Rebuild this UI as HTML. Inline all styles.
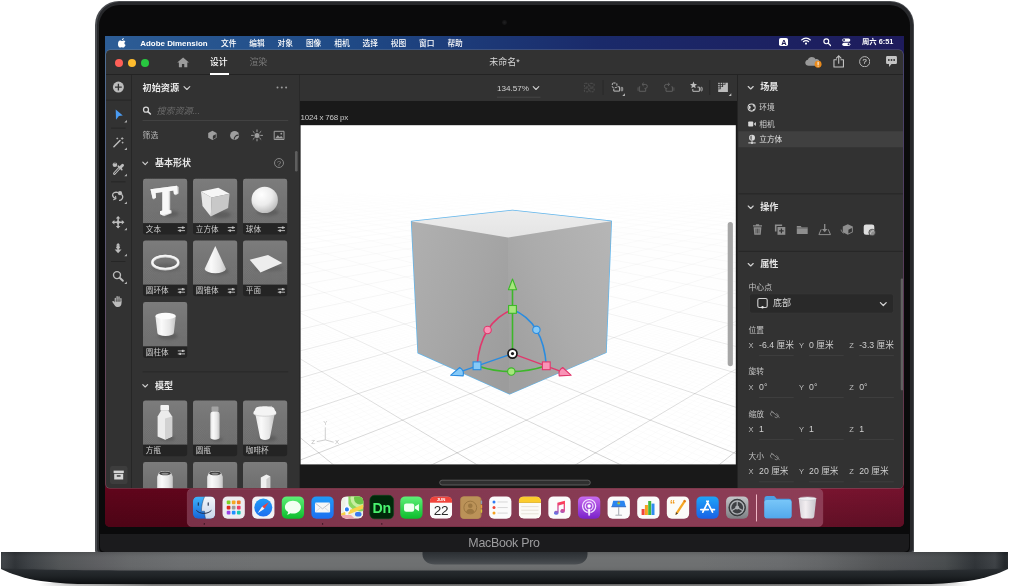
<!DOCTYPE html>
<html lang="zh-CN">
<head>
<meta charset="utf-8">
<title>Adobe Dimension – MacBook Pro</title>
<style>
*{box-sizing:border-box;margin:0;padding:0}
html,body{width:1009px;height:586px;overflow:hidden;background:#fff}
body{position:relative;font-family:"Liberation Sans","Noto Sans CJK SC",sans-serif;color:#d0d0d0;-webkit-font-smoothing:antialiased}
.abs{position:absolute}
/* ---------- laptop ---------- */
#shadow{left:40px;top:582.5px;width:929px;height:4px;background:linear-gradient(90deg,rgba(90,90,90,0) 0%,rgba(90,90,90,.5) 4%,rgba(80,80,80,.95) 12%,rgba(70,70,70,1) 50%,rgba(80,80,80,.95) 88%,rgba(90,90,90,.5) 96%,rgba(90,90,90,0) 100%)}
#shadow2{left:40px;top:583.5px;width:929px;height:2.5px;background:linear-gradient(180deg,rgba(255,255,255,.1) 0%,rgba(255,255,255,.32) 100%)}
#lid{left:95px;top:.8px;width:819px;height:552px;border-radius:24px 24px 2.5px 2.5px;background:#494b4f}
#lid2{left:96.5px;top:2.3px;width:816px;height:550px;border-radius:22.5px 22.5px 3px 3px;background:#27282b}
#bezel{left:98.7px;top:4.5px;width:811.6px;height:548px;border-radius:20.5px 20.5px 5px 5px;background:#0a0a0b}
#chin{left:100.2px;top:534px;width:808.6px;height:17.6px;background:#1b1b1d;border-radius:0 0 5px 5px}
#mbp{will-change:transform;left:404px;top:536.1px;width:200px;text-align:center;font-size:12.4px;line-height:15px;color:#9d9d9f;letter-spacing:-.28px}
#cam{left:502.2px;top:19.9px;width:4.8px;height:4.8px;border-radius:50%;background:radial-gradient(circle,#1f1f21 0%,#161617 55%,#0d0d0e 100%)}
#base{left:0;top:551.5px;width:1009px;height:34px}
/* ---------- screen ---------- */
#screen{will-change:transform;left:105px;top:36px;width:799px;height:491px;border-radius:0 0 5px 5px;overflow:hidden;
background:linear-gradient(180deg,rgba(0,0,0,0) 0%,rgba(0,0,0,0) 3%,#5a0519 100%),linear-gradient(90deg,#2d5d96 0%,#1f4a86 30%,#1a2a6a 62%,#1e1b5c 100%)}
#wall{left:0;top:452px;width:799px;height:39px;background:linear-gradient(180deg,rgba(0,0,0,0) 0%,rgba(0,0,0,.2) 100%),linear-gradient(90deg,#60051b 0%,#62061d 45%,#6c0c26 75%,#79142f 90%,#74122d 100%)}

#pg{left:-105px;top:-36px;width:1009px;height:586px}
/* menubar */
#mb{left:105px;top:36px;width:799px;height:14.6px;font-size:7.7px;line-height:14.6px;color:#fff;font-weight:500}
#mb span{position:absolute;top:.7px;white-space:nowrap}
#mb b{font-weight:700}
/* app window */
#win{left:106px;top:50.4px;width:797.4px;height:437.8px;border-radius:4.5px 4.5px 4px 4px;background:#323232;overflow:hidden;box-shadow:0 0 0 .6px rgba(150,150,150,.55)}
#winin{left:-106px;top:-50.4px;width:1009px;height:586px}
.dot{width:8px;height:8px;border-radius:50%;top:59.1px}
.hl{background:#262626;height:1px}
.vl{background:#262626;width:1px}
.t{white-space:nowrap;line-height:12px}
</style>
</head>
<body>
<div id="shadow" class="abs"></div><div id="shadow2" class="abs"></div>
<div id="lid" class="abs"></div>
<div id="lid2" class="abs"></div>
<div id="bezel" class="abs"></div>
<div id="chin" class="abs"></div>
<div id="cam" class="abs"></div>
<div id="mbp" class="abs">MacBook Pro</div>
<svg class="abs" style="left:0;top:550px" width="1009" height="36" viewBox="0 550 1009 36">
<defs>
<linearGradient id="bh" x1="0" x2="1009" y1="0" y2="0" gradientUnits="userSpaceOnUse">
<stop offset="0.0000" stop-color="#33373b"/><stop offset="0.0030" stop-color="#3c4044"/><stop offset="0.0149" stop-color="#2c3034"/><stop offset="0.0297" stop-color="#3a3e42"/><stop offset="0.0595" stop-color="#4f5254"/><stop offset="0.0991" stop-color="#5b5c5f"/><stop offset="0.1288" stop-color="#636567"/><stop offset="0.1784" stop-color="#696b6d"/><stop offset="0.2577" stop-color="#6b6d6e"/><stop offset="0.6938" stop-color="#6b6d6e"/><stop offset="0.7730" stop-color="#67696b"/><stop offset="0.8127" stop-color="#616365"/><stop offset="0.8523" stop-color="#56585a"/><stop offset="0.8722" stop-color="#505254"/><stop offset="0.9039" stop-color="#4c4e51"/><stop offset="0.9366" stop-color="#45494b"/><stop offset="0.9663" stop-color="#2c3034"/><stop offset="0.9861" stop-color="#3a3e42"/><stop offset="0.9960" stop-color="#1e2226"/><stop offset="1.0000" stop-color="#23272b"/>
</linearGradient>
<linearGradient id="bv" x1="0" x2="0" y1="0" y2="1">
<stop offset="0" stop-color="#000" stop-opacity=".1"/><stop offset=".4" stop-color="#fff" stop-opacity=".03"/><stop offset=".7" stop-color="#fff" stop-opacity=".02"/><stop offset="1" stop-color="#000" stop-opacity=".05"/>
</linearGradient>
<linearGradient id="bl" x1="0" x2="0" y1="0" y2="1">
<stop offset="0" stop-color="#33373b"/><stop offset=".45" stop-color="#2e3236"/><stop offset=".75" stop-color="#1f2326"/><stop offset="1" stop-color="#0d0f11"/>
</linearGradient>
<linearGradient id="nt" x1="0" x2="0" y1="0" y2="1">
<stop offset="0" stop-color="#2b2f33"/><stop offset=".55" stop-color="#3a3e42"/><stop offset="1" stop-color="#4c5054"/>
</linearGradient>
</defs>
<path d="M1,552.3 L1008,552.3 L1008,569 C1000,573 985,578.5 968,581 C950,583.5 935,584 920,584 L89,584 C74,584 59,583.5 41,581 C24,578.5 9,573 1,569 Z" fill="url(#bl)"/>
<path d="M1,552 L1008,552 L1008,568.6 C975,569.6 940,570.4 890,570.4 L119,570.4 C69,570.4 34,569.6 1,568.6 Z" fill="url(#bh)"/>
<path d="M1,552 L1008,552 L1008,568.6 C975,569.6 940,570.4 890,570.4 L119,570.4 C69,570.4 34,569.6 1,568.6 Z" fill="url(#bv)"/>
<path d="M422.5,552 L587.5,552 L587.5,554.6 C587.5,560.6 582,564.6 575,564.6 L435,564.6 C428,564.6 422.5,560.6 422.5,554.6 Z" fill="url(#nt)"/>
</svg>
<div id="screen" class="abs">
<div id="wall" class="abs"></div>
<div id="pg" class="abs">
<div id="mb" class="abs">
<svg class="abs" style="left:13.4px;top:2.2px" width="8.2" height="9.6" viewBox="0 0 170 200"><path fill="#fff" d="M150 156c-3 7-6 13-10 19-6 8-10 14-14 17-5 5-11 8-17 8-4 0-10-1-16-4-6-2-12-4-17-4-5 0-11 2-18 4-6 3-11 4-15 4-6 0-12-2-17-8-4-3-9-9-14-17-6-9-11-19-15-30C3 133 1 121 1 110c0-13 3-24 8-33 4-8 10-13 17-18 7-4 15-6 23-6 5 0 11 1 18 4 7 3 12 4 14 4 2 0 7-2 16-5 8-3 15-4 21-4 16 1 28 7 36 19-14 9-21 21-21 36 0 12 4 22 13 30 4 4 8 6 13 8-1 4-2 7-4 11zM119 4c0 9-3 18-10 26-8 10-18 15-28 14 0-1 0-2 0-4 0-9 4-18 11-26 3-4 8-8 13-10 5-3 10-4 15-4 0 1 0 3 0 4z"/></svg>
<span style="left:35.3px"><b style="font-size:7.93px">Adobe Dimension</b></span>
<span style="left:116px">文件</span><span style="left:144.3px">编辑</span><span style="left:172.6px">对象</span><span style="left:200.9px">图像</span><span style="left:229.2px">相机</span><span style="left:257.5px">选择</span><span style="left:285.8px">视图</span><span style="left:314.1px">窗口</span><span style="left:342.4px">帮助</span>
<div class="abs" style="left:674.4px;top:1.6px;width:9px;height:8.8px;border-radius:1.8px;background:#fff;color:#1b1a55;font-size:7.4px;font-weight:700;line-height:9px;text-align:center">A</div>
<svg class="abs" style="left:696.4px;top:1.2px" width="10" height="8" viewBox="0 0 20 16"><g fill="none" stroke="#fff" stroke-width="2.6" stroke-linecap="round"><path d="M1.5 5.8C6.3 1 13.7 1 18.5 5.8"/><path d="M4.9 9.3c2.9-2.9 7.300-2.900 10.200 0"/></g><circle cx="10" cy="13.200" r="2.100" fill="#fff"/></svg>
<svg class="abs" style="left:717.6px;top:2.200px" width="8.400" height="8.400" viewBox="0 0 16 16"><circle cx="6.300" cy="6.300" r="4.600" fill="none" stroke="#fff" stroke-width="2.200"/><path d="M9.800 9.800L14.500 14.500" stroke="#fff" stroke-width="2.600" stroke-linecap="round"/></svg>
<svg class="abs" style="left:737.4px;top:1.600px" width="8.600" height="8.400" viewBox="0 0 17 16"><rect x=".5" y=".5" width="16" height="6.600" rx="3.300" fill="#fff"/><circle cx="4" cy="3.800" r="1.900" fill="#1b1a55"/><rect x=".5" y="8.900" width="16" height="6.600" rx="3.300" fill="#fff"/><circle cx="13" cy="12.200" r="1.900" fill="#1b1a55"/><rect x="1.500" y="9.900" width="8.500" height="4.600" rx="2.300" fill="#1b1a55" opacity=".0"/></svg>
<span style="left:757px;top:-.6px;font-weight:700;font-size:7.350px">周六 6:51</span>
</div>
<div id="win" class="abs"><div id="winin" class="abs">
<div class="abs dot" style="left:114.5px;background:#fe5f57"></div><div class="abs dot" style="left:127.800px;background:#febc2e"></div><div class="abs dot" style="left:140.600px;background:#28c840"></div>
<svg class="abs" style="left:176.600px;top:57.200px" width="12.200" height="10.400" viewBox="0 0 24 20"><path fill="#9c9c9c" d="M12 0.600L0.400 10.800h3.300V20h6v-6.400h4.600V20h6v-9.200h3.300z"/></svg>
<div class="abs t" style="left:210px;top:56.300px;font-size:8.800px;color:#fff;font-weight:500">设计</div>
<div class="abs" style="left:210px;top:73.400px;width:19px;height:1.800px;background:#fff;z-index:3"></div>
<div class="abs t" style="left:249.500px;top:56.300px;font-size:8.800px;color:#7b7b7b">渲染</div>
<div class="abs t" style="left:404.500px;width:200px;text-align:center;top:55.800px;font-size:9px;color:#d8d8d8">未命名*</div>
<svg class="abs" style="left:804.500px;top:56.600px" width="17" height="11" viewBox="0 0 34 22"><path fill="#9a9a9a" d="M7.500 17.500C3.500 17.500 .5 14.800 .5 11.300c0-3 2.300-5.400 5.300-5.900C6.900 2.300 10 .2 13.600 .2c3.300 0 6.100 1.700 7.500 4.300 .6-.2 1.300-.3 2-.3 3.600 0 6.400 2.900 6.400 6.500 0 3.800-2.900 6.800-6.500 6.800z"/><circle cx="26.200" cy="14.400" r="6.900" fill="#e98a1c"/><path d="M26.200 10.300v4.800" stroke="#fff" stroke-width="2" stroke-linecap="round"/><circle cx="26.200" cy="18.100" r="1.150" fill="#fff"/></svg>
<svg class="abs" style="left:832.800px;top:54.600px" width="11.400" height="13" viewBox="0 0 22 26"><g fill="none" stroke="#c2c2c2" stroke-width="2.200" stroke-linejoin="round" stroke-linecap="round"><path d="M6.500 9.500H1.500v14.500h19V9.500h-5"/><path d="M11 16.500V2.200"/><path d="M6.400 6.300L11 1.700l4.600 4.600"/></g></svg>
<svg class="abs" style="left:858.600px;top:56px" width="11.400" height="11.400" viewBox="0 0 22 22"><circle cx="11" cy="11" r="9.800" fill="none" stroke="#c2c2c2" stroke-width="1.800"/><text x="11" y="16.300" text-anchor="middle" font-family="Liberation Sans,sans-serif" font-size="15" fill="#c2c2c2" stroke="#c2c2c2" stroke-width=".4">?</text></svg>
<svg class="abs" style="left:885.600px;top:56px" width="11" height="11.400" viewBox="0 0 22 23"><path fill="#c4c4c4" d="M2.500 0h17A2.500 2.500 0 0 1 22 2.500v11A2.500 2.500 0 0 1 19.500 16H11l-5 6v-6H2.500A2.500 2.500 0 0 1 0 13.500v-11A2.500 2.500 0 0 1 2.500 0z"/><circle cx="5.600" cy="8" r="1.900" fill="#323232"/><circle cx="11" cy="8" r="1.900" fill="#323232"/><circle cx="16.400" cy="8" r="1.900" fill="#323232"/></svg>
<div class="abs hl" style="left:106px;top:74.300px;width:798px;background:#232323"></div>
<svg class="abs" style="left:106px;top:75px" width="26" height="413" viewBox="106 75 26 413">
<rect x="131" y="75" width="1" height="413" fill="#262626"/>
<circle cx="118.400" cy="87.100" r="5.500" fill="#bcbcbc"/><path d="M118.400 83.700v6.800M115 87.100h6.800" stroke="#323232" stroke-width="1.300"/>
<rect x="106" y="99.600" width="25" height="1" fill="#262626"/>
<path d="M115.700 109.600L122.800 115.400L118.900 116L116 119.800z" fill="#4a9bf2"/><path d="M126.89999999999999,119.9V122.5H124.3z" fill="#b9b9b9"/>
<rect x="111" y="127.600" width="14.500" height="1" fill="#262626"/>
<path d="M113.900 146.700L120 140.500" stroke="#bcbcbc" stroke-width="1.500" stroke-linecap="round"/><path d="M122.200 137.200v2.600M120.900 138.500h2.600M117.300 137.600v1.800M116.400 138.500h1.800M122.600 141.700v1.800M121.700 142.600h1.800" stroke="#bcbcbc" stroke-width=".8"/><path d="M126.89999999999999,147.5V150.10000000000002H124.3z" fill="#b9b9b9"/>
<circle cx="114.900" cy="164.700" r="2.300" fill="#bcbcbc"/><path d="M113.700 163.500a1.700 1.700 0 0 1 2.400 0" stroke="#323232" stroke-width=".7" fill="none"/>
<path d="M114.300 173.600L119.300 168.100" stroke="#bcbcbc" stroke-width="2.700" stroke-linecap="round"/><path d="M114.600 173.300L119 168.500" stroke="#323232" stroke-width="1" stroke-linecap="round"/><path d="M118.300 166.100l3.500 3.500" stroke="#bcbcbc" stroke-width="1.600" stroke-linecap="round"/><path d="M120.600 167.300L122.600 165.200" stroke="#bcbcbc" stroke-width="2.800" stroke-linecap="round"/><path d="M126.89999999999999,173.7V176.3H124.3z" fill="#b9b9b9"/>
<rect x="111" y="181.300" width="14.500" height="1" fill="#262626"/>
<path d="M117.400 192.400c-2.600-.6-4.800 .7-4.800 2.700 0 1.500 1.100 2.700 2.600 3.300M121.800 194.800c1.300 1.300 1.300 3.300-.2 4.600-.6 .5-1.300 .8-2 .9" fill="none" stroke="#bcbcbc" stroke-width="1.300" stroke-linecap="round"/><path d="M113.600 199.700l2.300-.9-.3-2.400" fill="none" stroke="#bcbcbc" stroke-width="1.100" stroke-linecap="round" stroke-linejoin="round"/><circle cx="120" cy="193.200" r="2.100" fill="#bcbcbc"/><path d="M126.89999999999999,201.39999999999998V204.0H124.3z" fill="#b9b9b9"/>
<path d="M118.100 217v10.400M112.900 222.200h10.400" stroke="#bcbcbc" stroke-width="1.500"/><path d="M118.100 215.900l2.300 2.600h-4.600zM118.100 228.500l2.300-2.600h-4.600zM111.800 222.200l2.600-2.300v4.600zM124.400 222.200l-2.600-2.300v4.600z" fill="#bcbcbc"/><circle cx="118.100" cy="222.200" r="1.700" fill="#bcbcbc"/><path d="M126.89999999999999,227.7V230.3H124.3z" fill="#b9b9b9"/>
<path d="M118.100 244v7.500" stroke="#bcbcbc" stroke-width="1.500"/><path d="M118.100 242.900l2.200 2.500h-4.400z" fill="#bcbcbc"/><path d="M118.100 253.200l3.400-3.700h-6.800z" fill="#bcbcbc"/><circle cx="118.100" cy="247.300" r="1.800" fill="#bcbcbc"/><path d="M126.89999999999999,253.7V256.3H124.3z" fill="#b9b9b9"/>
<rect x="111" y="261" width="14.500" height="1" fill="#262626"/>
<circle cx="117" cy="275.100" r="3.500" fill="none" stroke="#bcbcbc" stroke-width="1.400"/><path d="M119.700 277.800l3.200 3" stroke="#bcbcbc" stroke-width="1.900" stroke-linecap="round"/><path d="M126.89999999999999,281.4V284.0H124.3z" fill="#b9b9b9"/>
<path d="M115.300 302v-3.600M117.100 301.200v-4.600M119 301.200v-4.400M120.900 301.800v-3.200" stroke="#bcbcbc" stroke-width="1.250" stroke-linecap="round"/><path d="M114.700 301.400h6.800v1.800c0 2.300-1.400 3.900-3.500 3.900-1.500 0-2.400-.6-3.200-1.700l-2.300-3.200c-.5-.8 .5-1.600 1.200-.9l1 1.100z" fill="#bcbcbc"/><path d="M116.200 299.500v2.200M118.050 299.500v2.200M119.950 299.500v2.200" stroke="#323232" stroke-width=".45"/>
<rect x="110" y="466" width="17.500" height="18" rx="2.200" fill="#3d3d3d"/>
<rect x="113.600" y="470.600" width="10.200" height="2.400" fill="#d6d6d6"/><path d="M114.200 473.800h9v5.700h-9z" fill="#d6d6d6"/><rect x="116.800" y="475.200" width="3.800" height="1.500" fill="#3d3d3d"/>
</svg>
<!--ASSETS-S--><svg class="abs" style="left:132px;top:75px" width="168" height="413" viewBox="132 75 168 413" font-family="Liberation Sans,Noto Sans CJK SC,sans-serif">
<defs>
<linearGradient id="tg" x1="0" x2="0" y1="0" y2="1"><stop offset="0" stop-color="#7c7c7c"/><stop offset=".55" stop-color="#737373"/><stop offset="1" stop-color="#6e6e6e"/></linearGradient>
<pattern id="tpp" width="1.500" height="1.500" patternUnits="userSpaceOnUse" patternTransform="rotate(45)"><rect width=".75" height=".75" fill="#fff" opacity=".09"/><rect x=".75" y=".75" width=".75" height=".75" fill="#000" opacity=".07"/></pattern>
<linearGradient id="tpm" x1="0" x2="0" y1="0" y2="1"><stop offset=".45" stop-color="#fff" stop-opacity="0"/><stop offset=".8" stop-color="#fff" stop-opacity="1"/></linearGradient>
<mask id="tm" maskContentUnits="objectBoundingBox"><rect width="1" height="1" fill="url(#tpm)"/></mask>
<pattern id="tp" width="44.200" height="44.400" patternUnits="userSpaceOnUse"><rect width="44.200" height="44.400" fill="url(#tpp)" mask="url(#tm)"/></pattern>
<radialGradient id="sg" cx=".38" cy=".3" r=".8"><stop offset="0" stop-color="#ffffff"/><stop offset=".5" stop-color="#ececec"/><stop offset=".85" stop-color="#c2c2c2"/><stop offset="1" stop-color="#adadad"/></radialGradient>
<linearGradient id="cg" x1="0" x2="1" y1="0" y2="0"><stop offset="0" stop-color="#e4e4e4"/><stop offset=".3" stop-color="#fafafa"/><stop offset=".7" stop-color="#e6e6e6"/><stop offset="1" stop-color="#c4c4c4"/></linearGradient>
<filter id="bl1" x="-50%" y="-100%" width="200%" height="300%"><feGaussianBlur stdDeviation="1.600"/></filter>
</defs>
<rect x="299.400" y="75" width=".8" height="413" fill="#242424"/>
<text x="142.600" y="90.700" font-size="9.150" font-weight="700" fill="#e8e8e8">初始资源</text>
<path d="M184 86.600l2.900 2.900 2.900-2.900" fill="none" stroke="#d0d0d0" stroke-width="1.150" stroke-linecap="round" stroke-linejoin="round"/>
<g fill="#9c9c9c"><circle cx="277.500" cy="87.400" r="1"/><circle cx="281.800" cy="87.400" r="1"/><circle cx="286.100" cy="87.400" r="1"/></g>
<circle cx="146" cy="109.700" r="2.500" fill="none" stroke="#d6d6d6" stroke-width="1.250"/><path d="M147.900 111.700l2.500 2.300" stroke="#d6d6d6" stroke-width="1.600" stroke-linecap="round"/>
<text x="156.400" y="113.900" font-size="9" font-style="italic" fill="#6c6c6c">搜索资源...</text>
<rect x="142.600" y="120" width="145.600" height=".8" fill="#474747"/>
<text x="142.600" y="138.300" font-size="7.850" fill="#b8b8b8">筛选</text>
<g fill="#9e9e9e"><path d="M212.400 130.700l4.200 2.200v4.900l-4.200 2.300-4.200-2.300v-4.900z"/><path d="M212.900 135.800l2.900-1.500v3.300l-2.900 1.600z" fill="#323232"/>
<circle cx="234.600" cy="135.400" r="4.500"/><path d="M234.200 139.600a4.200 4.200 0 0 1 4.500-4.500" fill="none" stroke="#323232" stroke-width="1.100"/>
<circle cx="257" cy="135.400" r="2.500"/><path d="M257 129.900v1.800M257 139.100v1.800M251.500 135.400h1.800M260.700 135.400h1.800M253.100 131.500l1.300 1.300M259.600 138l1.300 1.300M253.100 139.300l1.300-1.300M259.600 132.800l1.300-1.300" stroke="#9e9e9e" stroke-width="1" stroke-linecap="round"/>
<path d="M274.200 131.300h9.800v8.200h-9.800z" fill="none" stroke="#9e9e9e" stroke-width="1"/><path d="M275 138.600l2.800-3.400 1.900 2 1.500-1.300 2.200 2.700z"/><circle cx="281.300" cy="133.700" r=".9"/></g>
<path d="M142.800 162.200l2.400 2.400 2.400-2.400" fill="none" stroke="#d0d0d0" stroke-width="1.150" stroke-linecap="round" stroke-linejoin="round"/>
<text x="154.900" y="166.300" font-size="9" font-weight="700" fill="#e6e6e6">基本形状</text>
<circle cx="279" cy="163" r="4.500" fill="none" stroke="#8c8c8c" stroke-width=".9"/><text x="279" y="165.700" font-size="7.400" text-anchor="middle" fill="#8c8c8c">?</text>
<rect x="295" y="151" width="2.600" height="20.600" rx="1.300" fill="#5e5e5e"/>
<g transform="translate(143,178.8)">
<path d="M0 2.400A2.400 2.400 0 0 1 2.400 0H41.800A2.400 2.400 0 0 1 44.200 2.400V44.4H0z" fill="url(#tg)"/>
<path d="M0 2.400A2.400 2.400 0 0 1 2.400 0H41.800A2.400 2.400 0 0 1 44.200 2.400V44.4H0z" fill="url(#tp)"/>
<ellipse cx="27" cy="35" rx="9" ry="3" fill="#3a3a3a" opacity="0.35" filter="url(#bl1)"/><path d="M7.500 10.500L33.900 7L35.600 8.300V14.600L32.800 16.400L31 15.400L30.400 11.800L27.200 12.300V31.200L28.600 31.800V34.500L21 37.400L17 35.200V32.400L20 31.800V13.300L12.600 14.300L13 19L10.800 20.600L9.600 19.600z" fill="#d2d2d2"/>
<path d="M7.500 10.500L33.900 7L34.600 14.600L31 15.400L30.400 11.800L25.800 12.400V31L27.600 31.800V34.300L19.400 36.400L17 35.200V32.400L19.200 31.800V13.300L12.600 14.300L13 19L9.600 19.600z" fill="#f8f8f8"/>
<path d="M0 44.4H44.200V53.4A2.400 2.400 0 0 1 41.800 55.8H2.400A2.400 2.400 0 0 1 0 53.4z" fill="#242424"/>
<text x="2.800" y="53.099999999999994" font-size="7.600" fill="#cdcdcd">文本</text>
<g stroke="#c4c4c4" stroke-width=".9" fill="#c4c4c4"><path d="M34.800 48.8h7.200M34.800 51.8h7.200" fill="none"/><rect x="38.900" y="47.699999999999996" width="1.700" height="2.200" stroke="none"/><rect x="36.300" y="50.699999999999996" width="1.700" height="2.200" stroke="none"/></g>
</g>
<g transform="translate(193,178.8)">
<path d="M0 2.400A2.400 2.400 0 0 1 2.400 0H41.800A2.400 2.400 0 0 1 44.200 2.400V44.4H0z" fill="url(#tg)"/>
<path d="M0 2.400A2.400 2.400 0 0 1 2.400 0H41.800A2.400 2.400 0 0 1 44.200 2.400V44.4H0z" fill="url(#tp)"/>
<ellipse cx="28" cy="36" rx="10" ry="3.5" fill="#3a3a3a" opacity="0.35" filter="url(#bl1)"/><path d="M8 12.800L25.300 9L36.600 15L18.600 18.800z" fill="#f6f6f6"/><path d="M8 12.800L18.600 18.800L17.800 37.600L9.500 27.100z" fill="#e6e6e6"/><path d="M18.600 18.800L36.600 15L35.100 29.300L17.800 37.600z" fill="#c8c8c8"/>
<path d="M0 44.4H44.200V53.4A2.400 2.400 0 0 1 41.800 55.8H2.400A2.400 2.400 0 0 1 0 53.4z" fill="#242424"/>
<text x="2.800" y="53.099999999999994" font-size="7.600" fill="#cdcdcd">立方体</text>
<g stroke="#c4c4c4" stroke-width=".9" fill="#c4c4c4"><path d="M34.800 48.8h7.200M34.800 51.8h7.200" fill="none"/><rect x="38.900" y="47.699999999999996" width="1.700" height="2.200" stroke="none"/><rect x="36.300" y="50.699999999999996" width="1.700" height="2.200" stroke="none"/></g>
</g>
<g transform="translate(243,178.8)">
<path d="M0 2.400A2.400 2.400 0 0 1 2.400 0H41.800A2.400 2.400 0 0 1 44.200 2.400V44.4H0z" fill="url(#tg)"/>
<path d="M0 2.400A2.400 2.400 0 0 1 2.400 0H41.800A2.400 2.400 0 0 1 44.200 2.400V44.4H0z" fill="url(#tp)"/>
<ellipse cx="25" cy="33.5" rx="11" ry="3.5" fill="#3a3a3a" opacity="0.35" filter="url(#bl1)"/><circle cx="21.700" cy="21.100" r="13.200" fill="url(#sg)"/>
<path d="M0 44.4H44.200V53.4A2.400 2.400 0 0 1 41.800 55.8H2.400A2.400 2.400 0 0 1 0 53.4z" fill="#242424"/>
<text x="2.800" y="53.099999999999994" font-size="7.600" fill="#cdcdcd">球体</text>
<g stroke="#c4c4c4" stroke-width=".9" fill="#c4c4c4"><path d="M34.800 48.8h7.200M34.800 51.8h7.200" fill="none"/><rect x="38.900" y="47.699999999999996" width="1.700" height="2.200" stroke="none"/><rect x="36.300" y="50.699999999999996" width="1.700" height="2.200" stroke="none"/></g>
</g>
<g transform="translate(143,240.4)">
<path d="M0 2.400A2.400 2.400 0 0 1 2.400 0H41.800A2.400 2.400 0 0 1 44.200 2.400V44.4H0z" fill="url(#tg)"/>
<path d="M0 2.400A2.400 2.400 0 0 1 2.400 0H41.800A2.400 2.400 0 0 1 44.200 2.400V44.4H0z" fill="url(#tp)"/>
<ellipse cx="23" cy="27" rx="14" ry="4" fill="#3a3a3a" opacity="0.3" filter="url(#bl1)"/><ellipse cx="22.300" cy="22.300" rx="13" ry="6.600" fill="none" stroke="#d4d4d4" stroke-width="2.600"/><ellipse cx="22.300" cy="21.800" rx="13" ry="6.500" fill="none" stroke="#f6f6f6" stroke-width="1.700"/>
<path d="M0 44.4H44.200V53.4A2.400 2.400 0 0 1 41.800 55.8H2.400A2.400 2.400 0 0 1 0 53.4z" fill="#242424"/>
<text x="2.800" y="53.099999999999994" font-size="7.600" fill="#cdcdcd">圆环体</text>
<g stroke="#c4c4c4" stroke-width=".9" fill="#c4c4c4"><path d="M34.800 48.8h7.200M34.800 51.8h7.200" fill="none"/><rect x="38.900" y="47.699999999999996" width="1.700" height="2.200" stroke="none"/><rect x="36.300" y="50.699999999999996" width="1.700" height="2.200" stroke="none"/></g>
</g>
<g transform="translate(193,240.4)">
<path d="M0 2.400A2.400 2.400 0 0 1 2.400 0H41.800A2.400 2.400 0 0 1 44.200 2.400V44.4H0z" fill="url(#tg)"/>
<path d="M0 2.400A2.400 2.400 0 0 1 2.400 0H41.800A2.400 2.400 0 0 1 44.200 2.400V44.4H0z" fill="url(#tp)"/>
<ellipse cx="25" cy="31" rx="11" ry="3.5" fill="#3a3a3a" opacity="0.35" filter="url(#bl1)"/><path d="M22.300 5.600L33 28.600A10.800 4.900 0 0 1 11.600 28.600z" fill="url(#cg)"/>
<path d="M0 44.4H44.200V53.4A2.400 2.400 0 0 1 41.800 55.8H2.400A2.400 2.400 0 0 1 0 53.4z" fill="#242424"/>
<text x="2.800" y="53.099999999999994" font-size="7.600" fill="#cdcdcd">圆锥体</text>
<g stroke="#c4c4c4" stroke-width=".9" fill="#c4c4c4"><path d="M34.800 48.8h7.200M34.800 51.8h7.200" fill="none"/><rect x="38.900" y="47.699999999999996" width="1.700" height="2.200" stroke="none"/><rect x="36.300" y="50.699999999999996" width="1.700" height="2.200" stroke="none"/></g>
</g>
<g transform="translate(243,240.4)">
<path d="M0 2.400A2.400 2.400 0 0 1 2.400 0H41.800A2.400 2.400 0 0 1 44.200 2.400V44.4H0z" fill="url(#tg)"/>
<path d="M0 2.400A2.400 2.400 0 0 1 2.400 0H41.800A2.400 2.400 0 0 1 44.200 2.400V44.4H0z" fill="url(#tp)"/>
<ellipse cx="26" cy="28" rx="14" ry="3" fill="#3a3a3a" opacity="0.25" filter="url(#bl1)"/><path d="M6.700 19.300L25 14.500L39.400 22.600L17.500 32.100z" fill="#ededed"/>
<path d="M0 44.4H44.200V53.4A2.400 2.400 0 0 1 41.800 55.8H2.400A2.400 2.400 0 0 1 0 53.4z" fill="#242424"/>
<text x="2.800" y="53.099999999999994" font-size="7.600" fill="#cdcdcd">平面</text>
<g stroke="#c4c4c4" stroke-width=".9" fill="#c4c4c4"><path d="M34.800 48.8h7.200M34.800 51.8h7.200" fill="none"/><rect x="38.900" y="47.699999999999996" width="1.700" height="2.200" stroke="none"/><rect x="36.300" y="50.699999999999996" width="1.700" height="2.200" stroke="none"/></g>
</g>
<g transform="translate(143,302.1)">
<path d="M0 2.400A2.400 2.400 0 0 1 2.400 0H41.800A2.400 2.400 0 0 1 44.200 2.400V44.4H0z" fill="url(#tg)"/>
<path d="M0 2.400A2.400 2.400 0 0 1 2.400 0H41.800A2.400 2.400 0 0 1 44.200 2.400V44.4H0z" fill="url(#tp)"/>
<ellipse cx="25" cy="34" rx="10" ry="3.5" fill="#3a3a3a" opacity="0.35" filter="url(#bl1)"/><path d="M12.400 14L14.400 30.800A8.200 3.100 0 0 0 30.800 30.800L32.800 14z" fill="url(#cg)"/><ellipse cx="22.600" cy="13.900" rx="10.200" ry="3.300" fill="#fbfbfb"/>
<path d="M0 44.4H44.200V53.4A2.400 2.400 0 0 1 41.800 55.8H2.400A2.400 2.400 0 0 1 0 53.4z" fill="#242424"/>
<text x="2.800" y="53.099999999999994" font-size="7.600" fill="#cdcdcd">圆柱体</text>
<g stroke="#c4c4c4" stroke-width=".9" fill="#c4c4c4"><path d="M34.800 48.8h7.200M34.800 51.8h7.200" fill="none"/><rect x="38.900" y="47.699999999999996" width="1.700" height="2.200" stroke="none"/><rect x="36.300" y="50.699999999999996" width="1.700" height="2.200" stroke="none"/></g>
</g>
<rect x="142.600" y="371.400" width="145.600" height=".9" fill="#292929"/>
<path d="M142.800 384.600l2.400 2.400 2.400-2.400" fill="none" stroke="#d0d0d0" stroke-width="1.150" stroke-linecap="round" stroke-linejoin="round"/>
<text x="154.900" y="388.900" font-size="9" font-weight="700" fill="#e6e6e6">模型</text>
<g transform="translate(143,400.4)">
<path d="M0 2.400A2.400 2.400 0 0 1 2.400 0H41.800A2.400 2.400 0 0 1 44.200 2.400V44.4H0z" fill="url(#tg)"/>
<path d="M0 2.400A2.400 2.400 0 0 1 2.400 0H41.800A2.400 2.400 0 0 1 44.200 2.400V44.4H0z" fill="url(#tp)"/>
<ellipse cx="24" cy="38" rx="8" ry="2.5" fill="#3a3a3a" opacity="0.35" filter="url(#bl1)"/><rect x="17.400" y="4.600" width="8.600" height="5.800" rx="1" fill="#f2f2f2"/><path d="M18 10.400H25.400L29.200 16V36L22 39.400L14.600 36V16z" fill="#ececec"/><path d="M22 18V39.400L29.200 36V16z" fill="#d2d2d2"/>
<path d="M0 44.4H44.200V53.4A2.400 2.400 0 0 1 41.800 55.8H2.400A2.400 2.400 0 0 1 0 53.4z" fill="#242424"/>
<text x="2.800" y="53.099999999999994" font-size="7.600" fill="#cdcdcd">方瓶</text>
</g>
<g transform="translate(193,400.4)">
<path d="M0 2.400A2.400 2.400 0 0 1 2.400 0H41.800A2.400 2.400 0 0 1 44.200 2.400V44.4H0z" fill="url(#tg)"/>
<path d="M0 2.400A2.400 2.400 0 0 1 2.400 0H41.800A2.400 2.400 0 0 1 44.200 2.400V44.4H0z" fill="url(#tp)"/>
<ellipse cx="24" cy="39" rx="6" ry="2" fill="#3a3a3a" opacity="0.35" filter="url(#bl1)"/><rect x="18.500" y="6.200" width="7" height="5" rx=".8" fill="#a4a4a4"/><path d="M17.400 13.800c0-1.600 1-2.800 2.400-2.800h4.400c1.400 0 2.400 1.200 2.400 2.800V37.400c0 1-2 1.900-4.600 1.900s-4.600-.9-4.600-1.900z" fill="url(#cg)"/>
<path d="M0 44.4H44.200V53.4A2.400 2.400 0 0 1 41.800 55.8H2.400A2.400 2.400 0 0 1 0 53.4z" fill="#242424"/>
<text x="2.800" y="53.099999999999994" font-size="7.600" fill="#cdcdcd">圆瓶</text>
</g>
<g transform="translate(243,400.4)">
<path d="M0 2.400A2.400 2.400 0 0 1 2.400 0H41.800A2.400 2.400 0 0 1 44.200 2.400V44.4H0z" fill="url(#tg)"/>
<path d="M0 2.400A2.400 2.400 0 0 1 2.400 0H41.800A2.400 2.400 0 0 1 44.200 2.400V44.4H0z" fill="url(#tp)"/>
<ellipse cx="25" cy="38" rx="9" ry="3" fill="#3a3a3a" opacity="0.35" filter="url(#bl1)"/><path d="M12.500 14.400L17 37c.2 1.500 2.400 2.500 5 2.500s4.800-1 5-2.500L31.500 14.400z" fill="url(#cg)"/><path d="M10.400 12.800c0-1.300 .7-2 1.200-2.400L12.700 7.600C13.400 6.500 17 5.800 21.800 5.800S30.300 6.500 31 7.600l1.100 2.800c.5 .4 1.200 1.100 1.200 2.400 0 1.800-5.100 3-11.500 3S10.400 14.600 10.400 12.800z" fill="#f4f4f4"/><path d="M25.500 6.600l3-1.300 1 1.600z" fill="#bbb"/><path d="M10.600 13.400c1.200 1.500 5.800 2.400 11.200 2.400s10-.9 11.200-2.400" fill="none" stroke="#c6c6c6" stroke-width=".7"/>
<path d="M0 44.4H44.200V53.4A2.400 2.400 0 0 1 41.800 55.8H2.400A2.400 2.400 0 0 1 0 53.4z" fill="#242424"/>
<text x="2.800" y="53.099999999999994" font-size="7.600" fill="#cdcdcd">咖啡杯</text>
</g>
<g transform="translate(143,462)">
<path d="M0 2.400A2.400 2.400 0 0 1 2.400 0H41.800A2.400 2.400 0 0 1 44.200 2.400V30H0z" fill="url(#tg)"/>
<path d="M0 2.400A2.400 2.400 0 0 1 2.400 0H41.800A2.400 2.400 0 0 1 44.200 2.400V30H0z" fill="url(#tp)"/>
<path d="M15.600 11.400c0-1.300 2.900-2.200 6.400-2.200s6.400 .9 6.400 2.200l1.400 3.400V30H14.200V14.800z" fill="url(#cg)"/><ellipse cx="22" cy="11.300" rx="5.900" ry="1.900" fill="#3c3c3c"/><ellipse cx="22" cy="11.700" rx="3.700" ry="1" fill="#8e8e8e"/>
</g>
<g transform="translate(193,462)">
<path d="M0 2.400A2.400 2.400 0 0 1 2.400 0H41.800A2.400 2.400 0 0 1 44.200 2.400V30H0z" fill="url(#tg)"/>
<path d="M0 2.400A2.400 2.400 0 0 1 2.400 0H41.800A2.400 2.400 0 0 1 44.200 2.400V30H0z" fill="url(#tp)"/>
<path d="M15.600 11.400c0-1.300 2.900-2.200 6.400-2.200s6.400 .9 6.400 2.200l1.400 3.400V30H14.200V14.800z" fill="url(#cg)"/><ellipse cx="22" cy="11.300" rx="5.900" ry="1.900" fill="#3c3c3c"/><ellipse cx="22" cy="11.700" rx="3.700" ry="1" fill="#8e8e8e"/>
</g>
<g transform="translate(243,462)">
<path d="M0 2.400A2.400 2.400 0 0 1 2.400 0H41.800A2.400 2.400 0 0 1 44.200 2.400V30H0z" fill="url(#tg)"/>
<path d="M0 2.400A2.400 2.400 0 0 1 2.400 0H41.800A2.400 2.400 0 0 1 44.200 2.400V30H0z" fill="url(#tp)"/>
<path d="M17.800 15.500L23.400 12.600L27.200 14.200V30H17.800z" fill="#f0f0f0"/><path d="M23.400 17.200L27.200 14.200V30H23.400z" fill="#cdcdcd"/>
</g>
</svg><!--ASSETS-E-->
<!--CANVAS-S--><svg class="abs" style="left:300px;top:75px" width="437" height="413" viewBox="300 75 437 413" font-family="Liberation Sans,Noto Sans CJK SC,sans-serif">
<defs>
<clipPath id="cv"><rect x="300.600" y="125.200" width="435.200" height="339.200"/></clipPath>
<linearGradient id="gf" x1="0" x2="0" y1="150" y2="464" gradientUnits="userSpaceOnUse"><stop offset="0" stop-color="#fff" stop-opacity="0"/><stop offset=".12" stop-color="#fff" stop-opacity="0"/><stop offset=".3" stop-color="#fff" stop-opacity=".1"/><stop offset=".5" stop-color="#fff" stop-opacity=".24"/><stop offset=".75" stop-color="#fff" stop-opacity=".65"/><stop offset="1" stop-color="#fff" stop-opacity="1"/></linearGradient>
<mask id="gm" maskUnits="userSpaceOnUse" x="300" y="125" width="437" height="340"><rect x="300" y="125" width="437" height="340" fill="url(#gf)"/></mask>
<linearGradient id="fl" x1="0" x2="1" y1=".15" y2=".85"><stop offset="0" stop-color="#afafaf"/><stop offset=".5" stop-color="#a6a6a6"/><stop offset="1" stop-color="#9c9c9c"/></linearGradient>
<linearGradient id="fr" x1="0" x2="1" y1=".8" y2=".1"><stop offset="0" stop-color="#9f9f9f"/><stop offset=".45" stop-color="#ababab"/><stop offset="1" stop-color="#b5b5b5"/></linearGradient>
<linearGradient id="ft" x1="0" x2="0" y1="0" y2="1"><stop offset="0" stop-color="#ededed"/><stop offset="1" stop-color="#e4e4e4"/></linearGradient>
</defs>
<rect x="300" y="100.800" width="437" height="388" fill="#191919"/>
<rect x="300.600" y="125.200" width="435.200" height="339.200" fill="#fff"/>
<g clip-path="url(#cv)"><g mask="url(#gm)" fill="none" stroke="#000">
<path stroke-opacity=".032" stroke-width=".7" d="M306.6 466.4L298.6 459.4M321.0 466.4L298.6 447.5M349.9 466.4L298.6 426.1M364.3 466.4L298.6 416.5M378.7 466.4L298.6 407.5M393.2 466.4L298.6 399.1M407.6 466.4L298.6 391.2M422.0 466.4L298.6 383.8M436.5 466.4L298.6 376.7M450.9 466.4L298.6 370.1M465.3 466.4L298.6 363.9M731.5 466.4L737.6 461.3M494.2 466.4L298.6 352.3M702.7 466.4L737.6 439.1M508.6 466.4L298.6 347.0M688.2 466.4L737.6 429.1M523.1 466.4L298.6 341.9M673.8 466.4L737.6 419.7M537.5 466.4L298.6 337.1M659.4 466.4L737.6 411.0M551.9 466.4L298.6 332.5M644.9 466.4L737.6 402.7M566.3 466.4L298.6 328.1M630.5 466.4L737.6 395.0M580.8 466.4L298.6 323.9M616.1 466.4L737.6 387.7M595.2 466.4L298.6 319.8M601.6 466.4L737.6 380.8M609.6 466.4L298.6 316.0M587.2 466.4L737.6 374.3M638.5 466.4L298.6 308.8M558.3 466.4L737.6 362.2M652.9 466.4L298.6 305.4M543.9 466.4L737.6 356.7M667.4 466.4L298.6 302.1M529.5 466.4L737.6 351.4M681.8 466.4L298.6 299.0M515.0 466.4L737.6 346.3M696.2 466.4L298.6 296.0M500.6 466.4L737.6 341.5M710.7 466.4L298.6 293.1M486.2 466.4L737.6 336.9M725.1 466.4L298.6 290.3M471.7 466.4L737.6 332.5M737.6 465.6L298.6 287.6M457.3 466.4L737.6 328.4M737.6 459.9L298.6 285.0M442.9 466.4L737.6 324.3M737.6 449.0L298.6 280.0M414.0 466.4L737.6 316.8M737.6 443.8L298.6 277.7M399.6 466.4L737.6 313.3M737.6 438.8L298.6 275.4M385.1 466.4L737.6 309.8M737.6 434.0L298.6 273.2M370.7 466.4L737.6 306.6M737.6 429.3L298.6 271.1M356.3 466.4L737.6 303.4M737.6 424.8L298.6 269.0M341.8 466.4L737.6 300.4M737.6 420.4L298.6 267.1M327.4 466.4L737.6 297.5M737.6 416.1L298.6 265.1M313.0 466.4L737.6 294.7M737.6 412.0L298.6 263.2M298.6 466.4L737.6 291.9M737.6 404.0L298.6 259.7M298.6 455.3L737.6 286.8M737.6 400.3L298.6 257.9M298.6 450.0L737.6 284.3M737.6 396.6L298.6 256.3M298.6 444.9L737.6 282.0M737.6 393.0L298.6 254.6M298.6 440.0L737.6 279.7M737.6 389.5L298.6 253.1M298.6 435.2L737.6 277.4M737.6 386.1L298.6 251.5M298.6 430.6L737.6 275.3M737.6 382.9L298.6 250.0M298.6 426.1L737.6 273.2M737.6 379.6L298.6 248.6M298.6 421.8L737.6 271.2M737.6 376.5L298.6 247.2M298.6 417.6L737.6 269.2M737.6 370.5L298.6 244.5M298.6 409.5L737.6 265.5M737.6 367.6L298.6 243.1M298.6 405.7L737.6 263.7M737.6 364.8L298.6 241.9M298.6 401.9L737.6 261.9M737.6 362.1L298.6 240.6M298.6 398.3L737.6 260.2M737.6 359.4L298.6 239.4M298.6 394.7L737.6 258.6M737.6 356.7L298.6 238.2M298.6 391.3L737.6 257.0M737.6 354.2L298.6 237.0M298.6 387.9L737.6 255.4M737.6 351.7L298.6 235.9M298.6 384.7L737.6 253.9M737.6 349.3L298.6 234.8M298.6 381.5L737.6 252.4M737.6 344.5L298.6 232.7M298.6 375.4L737.6 249.5M737.6 342.3L298.6 231.6M298.6 372.4L737.6 248.2M737.6 340.0L298.6 230.6M298.6 369.6L737.6 246.8M737.6 337.8L298.6 229.6M298.6 366.7L737.6 245.5M737.6 335.7L298.6 228.7M298.6 364.0L737.6 244.3M737.6 333.6L298.6 227.7M298.6 361.3L737.6 243.0M737.6 331.6L298.6 226.8M298.6 358.7L737.6 241.8M737.6 329.6L298.6 225.9M298.6 356.2L737.6 240.6M737.6 327.6L298.6 225.0M298.6 353.7L737.6 239.5M737.6 323.8L298.6 223.3M298.6 348.9L737.6 237.2M737.6 322.0L298.6 222.4M298.6 346.6L737.6 236.1M737.6 320.2L298.6 221.6M298.6 344.3L737.6 235.1M737.6 318.4L298.6 220.8M298.6 342.1L737.6 234.0M737.6 316.7L298.6 220.0M298.6 339.9L737.6 233.0M737.6 315.0L298.6 219.3M298.6 337.8L737.6 232.0M737.6 313.3L298.6 218.5M298.6 335.7L737.6 231.1M737.6 311.6L298.6 217.8M298.6 333.6L737.6 230.1M737.6 310.0L298.6 217.0M298.6 331.6L737.6 229.2M737.6 306.9L298.6 215.6M298.6 327.8L737.6 227.4M737.6 305.4L298.6 214.9M298.6 325.9L737.6 226.5M737.6 303.9L298.6 214.2M298.6 324.0L737.6 225.6M737.6 302.4L298.6 213.6M298.6 322.2L737.6 224.8M737.6 301.0L298.6 212.9M298.6 320.5L737.6 224.0M737.6 299.6L298.6 212.3M298.6 318.7L737.6 223.2M737.6 298.2L298.6 211.6M298.6 317.0L737.6 222.4M737.6 296.8L298.6 211.0M298.6 315.3L737.6 221.6M737.6 295.5L298.6 210.4M298.6 313.7L737.6 220.8M737.6 292.8L298.6 209.2M298.6 310.5L737.6 219.3M737.6 291.6L298.6 208.6M298.6 309.0L737.6 218.6M737.6 290.3L298.6 208.1M298.6 307.4L737.6 217.9M737.6 289.1L298.6 207.5M298.6 305.9L737.6 217.2M737.6 287.9L298.6 207.0M298.6 304.5L737.6 216.5M737.6 286.7L298.6 206.4M298.6 303.0L737.6 215.9M737.6 285.5L298.6 205.9M298.6 301.6L737.6 215.2M737.6 284.3L298.6 205.4M298.6 300.2L737.6 214.5M737.6 283.2L298.6 204.8M298.6 298.8L737.6 213.9M737.6 281.0L298.6 203.8M298.6 296.2L737.6 212.7M737.6 279.9L298.6 203.3M298.6 294.9L737.6 212.0M737.6 278.8L298.6 202.9M298.6 293.6L737.6 211.5M737.6 277.7L298.6 202.4M298.6 292.3L737.6 210.9M737.6 276.7L298.6 201.9M298.6 291.1L737.6 210.3M737.6 275.7L298.6 201.4M298.6 289.9L737.6 209.7M737.6 274.7L298.6 201.0M298.6 288.7L737.6 209.2M737.6 273.7L298.6 200.5M298.6 287.5L737.6 208.6M737.6 272.7L298.6 200.1M298.6 286.3L737.6 208.1M737.6 270.8L298.6 199.2M298.6 284.0L737.6 207.0M737.6 269.9L298.6 198.8M298.6 282.9L737.6 206.5M737.6 268.9L298.6 198.4M298.6 281.8L737.6 206.0M737.6 268.0L298.6 198.0M298.6 280.8L737.6 205.5M737.6 267.1L298.6 197.6M298.6 279.7L737.6 205.0M737.6 266.2L298.6 197.2M298.6 278.7L737.6 204.5M737.6 265.4L298.6 196.8M298.6 277.6L737.6 204.0M737.6 264.5L298.6 196.4M298.6 276.6L737.6 203.6M737.6 263.7L298.6 196.0M298.6 275.6L737.6 203.1M737.6 262.0L298.6 195.2M298.6 273.7L737.6 202.2M737.6 261.2L298.6 194.9M298.6 272.7L737.6 201.7M737.6 260.4L298.6 194.5M298.6 271.8L737.6 201.3M737.6 259.6L298.6 194.1M298.6 270.8L737.6 200.9M737.6 258.8L298.6 193.8M298.6 269.9L737.6 200.4M737.6 258.0L298.6 193.4M298.6 269.0L737.6 200.0M737.6 257.3L298.6 193.1M298.6 268.1L737.6 199.6M737.6 256.5L298.6 192.7M298.6 267.2L737.6 199.2M737.6 255.8L298.6 192.4M298.6 266.4L737.6 198.8M737.6 254.3L298.6 191.8M298.6 264.7L737.6 198.0M737.6 253.6L298.6 191.4M298.6 263.8L737.6 197.6M737.6 252.9L298.6 191.1M298.6 263.0L737.6 197.2M737.6 252.2L298.6 190.8M298.6 262.2L737.6 196.8M737.6 251.5L298.6 190.5M298.6 261.4L737.6 196.5M737.6 250.8L298.6 190.2M298.6 260.6L737.6 196.1M737.6 250.1L298.6 189.9M298.6 259.8L737.6 195.7M737.6 249.5L298.6 189.6M298.6 259.1L737.6 195.4M737.6 248.8L298.6 189.3M298.6 258.3L737.6 195.0M737.6 247.5L298.6 188.7M298.6 256.8L737.6 194.3M737.6 246.9L298.6 188.4M298.6 256.1L737.6 194.0M737.6 246.3L298.6 188.1M298.6 255.4L737.6 193.7M737.6 245.6L298.6 187.8M298.6 254.7L737.6 193.3M737.6 245.0L298.6 187.5M298.6 254.0L737.6 193.0M737.6 244.4L298.6 187.3M298.6 253.3L737.6 192.7M737.6 243.8L298.6 187.0M298.6 252.6L737.6 192.4M737.6 243.2L298.6 186.7M298.6 251.9L737.6 192.0M737.6 242.6L298.6 186.5M298.6 251.2L737.6 191.7"/>
<path stroke-opacity=".2" stroke-width=".9" d="M335.4 466.4L298.6 436.4M479.8 466.4L298.6 357.9M717.1 466.4L737.6 449.8M624.1 466.4L298.6 312.3M572.8 466.4L737.6 368.1M737.6 454.3L298.6 282.5M428.4 466.4L737.6 320.5M737.6 407.9L298.6 261.4M298.6 460.7L737.6 289.3M737.6 373.5L298.6 245.8M298.6 413.5L737.6 267.3M737.6 346.9L298.6 233.7M298.6 378.4L737.6 251.0M737.6 325.7L298.6 224.1M298.6 351.3L737.6 238.3M737.6 308.5L298.6 216.3M298.6 329.7L737.6 228.3M737.6 294.1L298.6 209.8M298.6 312.1L737.6 220.1M737.6 282.1L298.6 204.3M298.6 297.5L737.6 213.3M737.6 271.7L298.6 199.7M298.6 285.2L737.6 207.5M737.6 262.8L298.6 195.6M298.6 274.6L737.6 202.6M737.6 255.0L298.6 192.1M298.6 265.5L737.6 198.4M737.6 248.2L298.6 189.0M298.6 257.6L737.6 194.7M737.6 242.1L298.6 186.2M298.6 250.6L737.6 191.4M737.6 236.6L298.6 183.7M298.6 244.3L737.6 188.5M737.6 231.7L298.6 181.5M298.6 238.8L737.6 185.9M737.6 227.3L298.6 179.5M298.6 233.8L737.6 183.6M737.6 223.3L298.6 177.7M298.6 229.3L737.6 181.5M737.6 219.6L298.6 176.0M298.6 225.2L737.6 179.6M737.6 216.3L298.6 174.5M298.6 221.4L737.6 177.8M737.6 213.2L298.6 173.1M298.6 218.0L737.6 176.2M737.6 210.3L298.6 171.8M298.6 214.8L737.6 174.8M737.6 207.7L298.6 170.6M298.6 211.9L737.6 173.4M737.6 205.3L298.6 169.5M298.6 209.2L737.6 172.2M737.6 203.0L298.6 168.5M298.6 206.7L737.6 171.0M737.6 200.9L298.6 167.5M298.6 204.4L737.6 169.9M737.6 198.9L298.6 166.6M298.6 202.3L737.6 168.9M737.6 197.0L298.6 165.8M298.6 200.2L737.6 168.0M737.6 195.3L298.6 165.0M298.6 198.3L737.6 167.1M298.6 196.5L737.6 166.3"/>
</g></g><g clip-path="url(#cv)">
<polygon points="411.6,221.5 512.5,210.5 611.25,221.25 606,352.4 509.6,393.9 418.1,352.7" fill="#a8a8a8" stroke="#62b6ec" stroke-width="1.500" stroke-linejoin="round"/>
<polygon points="411.6,221.5 508.1,237.6 509.6,393.9 418.1,352.7" fill="url(#fl)"/>
<polygon points="508.1,237.6 611.25,221.25 606,352.4 509.6,393.9" fill="url(#fr)"/>
<polygon points="411.6,221.5 512.5,210.5 611.25,221.25 508.1,237.6" fill="url(#ft)"/>
<g fill="none" stroke-width="1.600" stroke-linecap="round">
<path d="M512.500 309.500Q480.450 322.350 477 365.800" stroke="#e0386c"/>
<path d="M512.500 309.500Q543.400 322 546.300 365.800" stroke="#2a8ce0"/>
<path d="M477 365.800Q511 377.400 546.300 365.800" stroke="#3db72a"/>
</g>
<g stroke-width="1.400" fill="none"><path d="M512.500 353.600V289" stroke="#3db72a" stroke-width="1.600"/><path d="M512.500 353.600L455 373.700" stroke="#2a8ce0"/><path d="M512.500 353.600L567 373.700" stroke="#e0386c"/></g>
<rect x="508.600" y="305.500" width="7.800" height="7.800" fill="#a6e67d" stroke="#3db72a" stroke-width="1.100"/>
<rect x="473.100" y="361.900" width="7.800" height="7.800" fill="#86c9f7" stroke="#2a8ce0" stroke-width="1.100"/>
<rect x="542.400" y="361.900" width="7.800" height="7.800" fill="#f993b6" stroke="#e0386c" stroke-width="1.100"/>
<circle cx="487.600" cy="330" r="3.700" fill="#f993b6" stroke="#e0386c" stroke-width="1.100"/>
<circle cx="536.400" cy="329.800" r="3.700" fill="#86c9f7" stroke="#2a8ce0" stroke-width="1.100"/>
<circle cx="511.300" cy="371.600" r="3.700" fill="#a6e67d" stroke="#3db72a" stroke-width="1.100"/>
<path d="M512.500 279L516.600 289.800H508.400z" fill="#a6e67d" stroke="#3db72a" stroke-width="1.100" stroke-linejoin="round"/>
<path d="M450.600 375.300L459.700 367.500Q464.600 370.500 463.200 375.900z" fill="#86c9f7" stroke="#2a8ce0" stroke-width="1.100" stroke-linejoin="round"/>
<path d="M571.200 375.300L562.700 367.500Q557.800 370.500 559.200 375.900z" fill="#f993b6" stroke="#e0386c" stroke-width="1.100" stroke-linejoin="round"/>
<circle cx="512.500" cy="353.600" r="4.500" fill="#fff" stroke="#1a1a1a" stroke-width="1.700"/><circle cx="512.500" cy="353.600" r="1.600" fill="#1a1a1a"/>
<g stroke="#c4c4c4" stroke-width=".8" fill="none"><path d="M325.300 439.900V427.400M325.300 439.900L316.800 441.600M325.300 439.900L333.600 442.200"/></g>
<g font-size="6.200" fill="#bdbdbd" text-anchor="middle"><text x="325.200" y="425">Y</text><text x="313.200" y="444.100">Z</text><text x="337" y="444.100">X</text></g>
<rect x="727.700" y="222" width="5.200" height="144.200" rx="2.600" fill="#a6a6a6"/>
</g>
<rect x="439.700" y="480.200" width="150.600" height="4.800" rx="2.400" fill="#2f2f2f" stroke="#6a6a6a" stroke-width=".8"/>
<rect x="300" y="75" width="437" height="25.900" fill="#323232"/>
<text x="300.500" y="119.900" font-size="8" letter-spacing="-.2" fill="#c9c9c9">1024 x 768 px</text>
<text x="497" y="90.600" font-size="8.100" fill="#d2d2d2">134.57%</text>
<path d="M533.200 86.700l2.800 2.800 2.800-2.800" fill="none" stroke="#cfcfcf" stroke-width="1.100" stroke-linecap="round" stroke-linejoin="round"/>
<rect x="497" y="96.800" width="43.500" height=".8" fill="#4a4a4a"/>
<g fill="none" stroke="#525252" stroke-width=".9" stroke-dasharray="2.200 1.100"><rect x="584.400" y="83.300" width="4.300" height="3.700" rx=".8"/><rect x="589.800" y="83.300" width="4.300" height="3.700" rx=".8"/><rect x="584.400" y="88.100" width="4.300" height="3.700" rx=".8"/><rect x="589.800" y="88.100" width="4.300" height="3.700" rx=".8"/></g>
<rect x="602.600" y="80" width=".9" height="15" fill="#262626"/><rect x="709.300" y="80" width=".9" height="15" fill="#262626"/>
<g fill="none" stroke="#bcbcbc" stroke-width="1"><rect x="612.300" y="83" width="4.600" height="4.600" rx="1" stroke-dasharray="2.300 1.100"/><path d="M613.800 88.600v2.500h5.800v-4.300h-2"/><rect x="621.200" y="87.300" width="1.500" height="3.600" rx=".6" stroke-width=".8"/></g><path d="M624.900 93.300v2.600h-2.600z" fill="#bcbcbc"/>
<g fill="none" stroke="#5e5e5e" stroke-width="1"><path d="M640.200 86.800h-.9v4.500h6.400v-3"/><path d="M638 87.400v3.400" stroke-width=".8"/><path d="M642.300 84.400h3a2 2 0 0 1 0 4h-.8"/><path d="M643.700 82.800l-1.700 1.600 1.700 1.600"/></g>
<g fill="none" stroke="#5e5e5e" stroke-width="1"><path d="M666 88.300v3h6.400v-4.500h-.9"/><path d="M673.900 87.400v3.400" stroke-width=".8"/><path d="M669.400 84.400h-3a2 2 0 0 0 0 4h.8"/><path d="M668 82.800l1.700 1.600-1.700 1.600"/></g>
<path d="M693.500 81.600l1 2.300 2.500.2-1.900 1.700.6 2.400-2.200-1.300-2.200 1.300.6-2.400-1.900-1.700 2.500-.2z" fill="#bcbcbc"/><g fill="none" stroke="#bcbcbc" stroke-width="1"><path d="M692.800 89v2.300h6.600v-4.200h-2"/><rect x="700.800" y="87.300" width="1.400" height="3.600" rx=".6" stroke-width=".8"/></g>
<path d="M727.900 82.800v9.100h-9.700v-2.600h2.500v-2.400h2.400v-2.100h2.300v-2z" fill="#bcbcbc"/><g fill="#bcbcbc"><rect x="718.200" y="82.800" width="1.500" height="1.400"/><rect x="720.700" y="82.800" width="1.500" height="1.400"/><rect x="723.200" y="82.800" width="1.400" height="1.400"/><rect x="718.200" y="85" width="1.500" height="1.400"/><rect x="720.700" y="85" width="1.400" height="1.400"/><rect x="718.200" y="87.200" width="1.500" height="1.400"/></g><path d="M731.300 93.300v2.600h-2.600z" fill="#bcbcbc"/>
</svg><!--CANVAS-E-->
<!--RIGHT-S--><svg class="abs" style="left:736.500px;top:75px" width="167.500" height="413" viewBox="736.500 75 167.500 413" font-family="Liberation Sans,Noto Sans CJK SC,sans-serif">
<rect x="736.500" y="75" width="167.500" height="413" fill="#323232"/><rect x="736.500" y="75" width="1" height="413" fill="#242424"/>
<path d="M747.7 86.49999999999999l2.500 2.500 2.500-2.500" fill="none" stroke="#d0d0d0" stroke-width="1.150" stroke-linecap="round" stroke-linejoin="round"/><text x="759.700" y="90.39999999999999" font-size="9.100" font-weight="700" fill="#e6e6e6">场景</text>
<circle cx="751.100" cy="107.600" r="3.550" fill="none" stroke="#d8d8d8" stroke-width="1.050"/><path d="M748.700 106c.8-.1 1.500 .4 1.600 1.100 .1 .7-.6 1-.6 1.700 0 .5 .3 .8 .4 1.300-1.100-.5-1.800-1.600-1.800-2.800 0-.5 .1-.9 .4-1.300zM752.200 104.800c.9 .3 1.600 1 1.900 1.900-.4 .3-.9 .2-1.200-.1-.4-.4-.2-.8-.5-1.200-.3-.2-.4-.4-.2-.6zM752.600 109c.4-.2 .9 0 1.100 .3-.3 .6-.8 1.100-1.400 1.300-.1-.6 0-1.200 .3-1.600z" fill="#d8d8d8"/>
<text x="758.700" y="110.400" font-size="7.700" fill="#cfcfcf">环境</text>
<rect x="747.700" y="121.500" width="5" height="5" rx=".8" fill="#d8d8d8"/><path d="M753.200 124l2.200-1.900v3.800z" fill="#d8d8d8"/>
<text x="758.700" y="126.800" font-size="7.700" fill="#cfcfcf">相机</text>
<rect x="738" y="131.300" width="166" height="16" fill="#404040"/>
<circle cx="751.500" cy="137.800" r="3" fill="#d8d8d8"/><path d="M751.500 135.600a2.200 2.200 0 0 0 0 4.400z" fill="#404040" opacity=".55"/><path d="M751.500 140.800v1.700M747.800 142.900h7.400" stroke="#d8d8d8" stroke-width="1"/><circle cx="751.500" cy="142.900" r="1" fill="#d8d8d8"/>
<text x="758.700" y="141.900" font-size="7.700" fill="#e2e2e2">立方体</text>
<rect x="738" y="193.300" width="166" height="1" fill="#262626"/>
<path d="M747.7 206.0l2.500 2.500 2.500-2.500" fill="none" stroke="#d0d0d0" stroke-width="1.150" stroke-linecap="round" stroke-linejoin="round"/><text x="759.700" y="209.9" font-size="9.100" font-weight="700" fill="#e6e6e6">操作</text>
<g fill="#8e8e8e"><path d="M755.400 224.200h3.200v1h2.900v1.300h-9v-1.300h2.900z"/><path d="M753.100 227.300h7.800l-.7 7.500h-6.400z"/></g><path d="M755.500 228.700v4.700M757 228.700v4.700M758.500 228.700v4.700" stroke="#323232" stroke-width=".6"/>
<path d="M774.400 224.400h7.200v1.600h-5.600v5.600h-1.600z" fill="#8e8e8e"/><rect x="777" y="227" width="7.800" height="7.800" fill="#8e8e8e"/><path d="M780.900 228.600v4.600M778.600 230.900h4.600" stroke="#323232" stroke-width="1.200"/>
<path d="M796.300 226h3.900l1 1.200h6v6.900h-10.900z" fill="#8e8e8e"/><path d="M796.300 228h10.900" stroke="#323232" stroke-width=".5"/>
<path d="M824.200 224v6.400" stroke="#8e8e8e" stroke-width="1.300"/><path d="M824.200 232.200l2.700-3.100h-5.400z" fill="#8e8e8e"/><path d="M820.700 229.300l-2.300 5.300h11.600l-2.300-5.300" fill="none" stroke="#8e8e8e" stroke-width="1"/>
<path d="M847.300 224.200l5 2.400v5.600l-5 2.600-5-2.600v-5.600z" fill="#8e8e8e"/><path d="M847.900 229.800l3.500-1.700v3.700l-3.500 1.800z" fill="#323232"/><path d="M840.600 229.600c.3 1.800 1.200 3 2.700 3.600" fill="none" stroke="#8e8e8e" stroke-width=".9"/>
<rect x="863.200" y="224.400" width="10.600" height="10.400" rx="2.300" fill="#dedede"/><circle cx="871.600" cy="232.500" r="3.300" fill="#8e8e8e" stroke="#323232" stroke-width=".6"/><path d="M870 234.300a3.200 3.200 0 0 1 3.600-3.500" fill="none" stroke="#dedede" stroke-width=".7"/>
<rect x="738" y="250.800" width="166" height="1" fill="#262626"/>
<path d="M747.7 263.50000000000006l2.500 2.500 2.500-2.500" fill="none" stroke="#d0d0d0" stroke-width="1.150" stroke-linecap="round" stroke-linejoin="round"/><text x="759.700" y="267.40000000000003" font-size="9.100" font-weight="700" fill="#e6e6e6">属性</text>
<text x="748" y="290.400" font-size="7.850" fill="#c4c4c4">中心点</text>
<rect x="749" y="294" width="144" height="19" rx="2.400" fill="#292929" stroke="#383838" stroke-width=".6"/>
<rect x="757.300" y="298.500" width="9.400" height="9" rx="1.600" fill="none" stroke="#d2d2d2" stroke-width="1.100"/><circle cx="762" cy="307.300" r="1.200" fill="#e6e6e6"/>
<text x="772.400" y="306.100" font-size="9.100" fill="#d8d8d8">底部</text>
<path d="M879.900 302.600l2.900 2.900 2.900-2.900" fill="none" stroke="#d6d6d6" stroke-width="1.250" stroke-linecap="round" stroke-linejoin="round"/>
<text x="748" y="332.5" font-size="7.700" fill="#c4c4c4">位置</text><text x="748" y="347.99999999999994" font-size="7.500" fill="#bdbdbd">X</text><text x="758.6" y="348.2" font-size="8.700" fill="#d0d0d0">-6.4 厘米</text><rect x="758.6" y="355.29999999999995" width="34.600" height=".8" fill="#424242"/><text x="798.5" y="347.99999999999994" font-size="7.500" fill="#bdbdbd">Y</text><text x="808.6" y="348.2" font-size="8.700" fill="#d0d0d0">0 厘米</text><rect x="808.6" y="355.29999999999995" width="34.600" height=".8" fill="#424242"/><text x="848.7" y="347.99999999999994" font-size="7.500" fill="#bdbdbd">Z</text><text x="858.7" y="348.2" font-size="8.700" fill="#d0d0d0">-3.3 厘米</text><rect x="858.7" y="355.29999999999995" width="34.600" height=".8" fill="#424242"/>
<text x="748" y="374.3" font-size="7.700" fill="#c4c4c4">旋转</text><text x="748" y="389.79999999999995" font-size="7.500" fill="#bdbdbd">X</text><text x="758.6" y="390.0" font-size="8.700" fill="#d0d0d0">0°</text><rect x="758.6" y="397.09999999999997" width="34.600" height=".8" fill="#424242"/><text x="798.5" y="389.79999999999995" font-size="7.500" fill="#bdbdbd">Y</text><text x="808.6" y="390.0" font-size="8.700" fill="#d0d0d0">0°</text><rect x="808.6" y="397.09999999999997" width="34.600" height=".8" fill="#424242"/><text x="848.7" y="389.79999999999995" font-size="7.500" fill="#bdbdbd">Z</text><text x="858.7" y="390.0" font-size="8.700" fill="#d0d0d0">0°</text><rect x="858.7" y="397.09999999999997" width="34.600" height=".8" fill="#424242"/>
<text x="748" y="416.5" font-size="7.700" fill="#c4c4c4">缩放</text><g fill="none" stroke="#8a8a8a" stroke-width=".9" stroke-linecap="round"><path d="M773.2 412.5a1.900 1.900 0 0 0-2.700 2.700l.8 .8M776.2 413.5l.9 .9a1.900 1.900 0 0 1-2.700 2.700"/><path d="M770.8 411.09999999999997l8 6.300"/></g><text x="748" y="431.99999999999994" font-size="7.500" fill="#bdbdbd">X</text><text x="758.6" y="432.2" font-size="8.700" fill="#d0d0d0">1</text><rect x="758.6" y="439.29999999999995" width="34.600" height=".8" fill="#424242"/><text x="798.5" y="431.99999999999994" font-size="7.500" fill="#bdbdbd">Y</text><text x="808.6" y="432.2" font-size="8.700" fill="#d0d0d0">1</text><rect x="808.6" y="439.29999999999995" width="34.600" height=".8" fill="#424242"/><text x="848.7" y="431.99999999999994" font-size="7.500" fill="#bdbdbd">Z</text><text x="858.7" y="432.2" font-size="8.700" fill="#d0d0d0">1</text><rect x="858.7" y="439.29999999999995" width="34.600" height=".8" fill="#424242"/>
<text x="748" y="458.6" font-size="7.700" fill="#c4c4c4">大小</text><g fill="none" stroke="#8a8a8a" stroke-width=".9" stroke-linecap="round"><path d="M773.2 454.6a1.900 1.900 0 0 0-2.700 2.700l.8 .8M776.2 455.6l.9 .9a1.900 1.900 0 0 1-2.700 2.700"/><path d="M770.8 453.2l8 6.300"/></g><text x="748" y="474.09999999999997" font-size="7.500" fill="#bdbdbd">X</text><text x="758.6" y="474.3" font-size="8.700" fill="#d0d0d0">20 厘米</text><rect x="758.6" y="481.4" width="34.600" height=".8" fill="#424242"/><text x="798.5" y="474.09999999999997" font-size="7.500" fill="#bdbdbd">Y</text><text x="808.6" y="474.3" font-size="8.700" fill="#d0d0d0">20 厘米</text><rect x="808.6" y="481.4" width="34.600" height=".8" fill="#424242"/><text x="848.7" y="474.09999999999997" font-size="7.500" fill="#bdbdbd">Z</text><text x="858.7" y="474.3" font-size="8.700" fill="#d0d0d0">20 厘米</text><rect x="858.7" y="481.4" width="34.600" height=".8" fill="#424242"/>
<rect x="900.200" y="278.400" width="2.600" height="112" rx="1.300" fill="#606060"/>
</svg><!--RIGHT-E-->
</div></div>
<!--DOCK-S--><svg class="abs" style="left:185px;top:486px" width="642" height="42" viewBox="185 486 642 42" font-family="Liberation Sans,Noto Sans CJK SC,sans-serif">
<defs>
<linearGradient id="dfa" x1="0" x2="0" y1="0" y2="1"><stop offset="0" stop-color="#3fb4fb"/><stop offset="1" stop-color="#1766d8"/></linearGradient>
<linearGradient id="dfb" x1="0" x2="0" y1="0" y2="1"><stop offset="0" stop-color="#f4f6fa"/><stop offset="1" stop-color="#c8d6ea"/></linearGradient>
<linearGradient id="dgr" x1="0" x2="0" y1="0" y2="1"><stop offset="0" stop-color="#5ff078"/><stop offset="1" stop-color="#0cbd2c"/></linearGradient>
<linearGradient id="dml" x1="0" x2="0" y1="0" y2="1"><stop offset="0" stop-color="#1e9bf8"/><stop offset="1" stop-color="#1d6ff0"/></linearGradient>
<linearGradient id="dpc" x1="0" x2="0" y1="0" y2="1"><stop offset="0" stop-color="#c86bf0"/><stop offset="1" stop-color="#7a22c9"/></linearGradient>
<linearGradient id="das" x1="0" x2="0" y1="0" y2="1"><stop offset="0" stop-color="#1ea4f8"/><stop offset="1" stop-color="#1a62e6"/></linearGradient>
<linearGradient id="dmu" x1=".3" x2="0" y1="0" y2="1"><stop offset="0" stop-color="#fb3c58"/><stop offset=".5" stop-color="#d04c9c"/><stop offset="1" stop-color="#4a7cf4"/></linearGradient>
<linearGradient id="dsp" x1="0" x2="0" y1="0" y2="1"><stop offset="0" stop-color="#c4c6c9"/><stop offset="1" stop-color="#7d8084"/></linearGradient>
<linearGradient id="dfo" x1="0" x2="0" y1="0" y2="1"><stop offset="0" stop-color="#78c6f8"/><stop offset="1" stop-color="#52a8ec"/></linearGradient>
<linearGradient id="dtr" x1="0" x2="1" y1="0" y2="0"><stop offset="0" stop-color="#dcdfe3"/><stop offset=".4" stop-color="#fafbfc"/><stop offset="1" stop-color="#c9ced4"/></linearGradient>
<linearGradient id="dbg" x1="0" x2="1" y1="0" y2="0"><stop offset="0" stop-color="#7a3148"/><stop offset=".5" stop-color="#853a52"/><stop offset="1" stop-color="#8d3d56"/></linearGradient>
<clipPath id="dcl"><rect x="0" y="0" width="22.300" height="22.300" rx="5"/></clipPath>
</defs>
<rect x="187.300" y="488.900" width="635.500" height="37.700" rx="4.400" fill="url(#dbg)"/>
<rect x="187.300" y="488.900" width="635.500" height="37.700" rx="4.400" fill="none" stroke="#a8687c" stroke-width=".5" opacity=".55"/>
<g transform="translate(192.90,496.4)"><g clip-path="url(#dcl)"><rect width="22.3" height="22.3" rx="5" fill="url(#dfa)"/><path d="M11.800 0H22.300V22.300H12.600C12 20 11.700 17.500 11.600 14.800H8.500C8.600 9.500 9.800 4.200 11.800 0z" fill="url(#dfb)"/></g><path d="M5.400 6.500v2.300M15.300 6.500v2.300" stroke="#1d2b4a" stroke-width="1.100" stroke-linecap="round"/><path d="M3.700 14.200c3.400 3.800 11.200 3.800 14.600 0" fill="none" stroke="#1d2b4a" stroke-width=".95" stroke-linecap="round"/><path d="M11.800 0C9.800 4.200 8.600 9.500 8.500 14.800H11.600C11.700 17.500 12 20 12.600 22.300" fill="none" stroke="#1d2b4a" stroke-width=".55" opacity=".75"/></g>
<g transform="translate(222.52,496.4)"><rect width="22.3" height="22.3" rx="5" fill="#ececf0"/><rect x="4.2" y="4.2" width="3.700" height="3.700" rx="1" fill="#7ed321"/><rect x="9.3" y="4.2" width="3.700" height="3.700" rx="1" fill="#f5a623"/><rect x="14.4" y="4.2" width="3.700" height="3.700" rx="1" fill="#f57c23"/><rect x="4.2" y="9.3" width="3.700" height="3.700" rx="1" fill="#e0281c"/><rect x="9.3" y="9.3" width="3.700" height="3.700" rx="1" fill="#9b9b9b"/><rect x="14.4" y="9.3" width="3.700" height="3.700" rx="1" fill="#ee3a6a"/><rect x="4.2" y="14.4" width="3.700" height="3.700" rx="1" fill="#9a42e8"/><rect x="9.3" y="14.4" width="3.700" height="3.700" rx="1" fill="#1e90ff"/><rect x="14.4" y="14.4" width="3.700" height="3.700" rx="1" fill="#18c8b0"/></g>
<g transform="translate(252.14,496.4)"><rect width="22.3" height="22.3" rx="5" fill="#f2f2f4"/><circle cx="11.150" cy="11.150" r="9" fill="url(#dml)"/><path d="M16.800 5.500l-4.500 6.800-2.300-2.300z" fill="#f0423c"/><path d="M5.500 16.800l4.500-6.800 2.300 2.300z" fill="#f4f4f4"/></g>
<g transform="translate(281.76,496.4)"><rect width="22.3" height="22.3" rx="5" fill="url(#dgr)"/><path d="M11.150 4.400c4.500 0 8 2.900 8 6.400s-3.500 6.400-8 6.400c-.9 0-1.800-.1-2.600-.3-.9 .8-2.200 1.300-3.500 1.300 .8-.7 1.300-1.600 1.400-2.600-2-1.200-3.300-2.900-3.300-4.800 0-3.500 3.500-6.400 8-6.400z" fill="#f2fff2"/></g>
<g transform="translate(311.38,496.4)"><rect width="22.3" height="22.3" rx="5" fill="url(#dml)"/><rect x="3.600" y="6.200" width="15.100" height="10" rx="1.400" fill="#f6f6f6"/><path d="M4 6.800l7.150 5.600 7.150-5.600" fill="none" stroke="#b8bcc4" stroke-width=".9"/><path d="M4 15.600l5-4.300M18.300 15.600l-5-4.300" stroke="#cfd3d9" stroke-width=".7"/></g>
<g transform="translate(341.00,496.4)"><g clip-path="url(#dcl)"><rect width="22.3" height="22.3" rx="5" fill="#eef0e4"/><circle cx="19" cy="2" r="13" fill="#8cd860"/><circle cx="19" cy="2" r="9.500" fill="#c8eea0"/><circle cx="19" cy="2" r="6" fill="#6cc448"/><path d="M0 17l22.300-9v4l-22.300 9z" fill="#f8d34a"/><path d="M4.400 0h3v22.300h-3z" fill="#f4f6f8"/><path d="M0 18.500h10l4 3.800H0z" fill="#f0a8b0"/><rect x="14" y="15.500" width="6.500" height="4.600" rx="2" fill="#3a7af0"/></g><circle cx="5.900" cy="13" r="2.600" fill="#2c7cf4" stroke="#fff" stroke-width="1.100"/></g>
<g transform="translate(370.62,496.4)"><rect x="-.8" y="-1.100" width="23.800" height="23.500" rx="4.800" fill="#00290a"/><rect x="-.8" y="-1.100" width="23.800" height="23.500" rx="4.800" fill="none" stroke="#0c4a1c" stroke-width=".6"/><text x="11.100" y="16.200" font-size="14.200" font-weight="700" text-anchor="middle" fill="#49f46e" letter-spacing="-.3">Dn</text></g>
<g transform="translate(400.24,496.4)"><rect width="22.3" height="22.3" rx="5" fill="url(#dgr)"/><rect x="3.800" y="7" width="10.200" height="8.300" rx="2.200" fill="#f0fff0"/><path d="M14.700 10.200l4-2.700v7.300l-4-2.700z" fill="#f0fff0"/></g>
<g transform="translate(429.86,496.4)"><g clip-path="url(#dcl)"><rect width="22.3" height="22.3" rx="5" fill="#fbfbfb"/><rect width="22.300" height="6.300" fill="#f0443c"/></g><text x="11.150" y="4.900" font-size="4.300" font-weight="700" text-anchor="middle" fill="#fff">JUN</text><text x="11.150" y="19" font-size="13.600" text-anchor="middle" fill="#2a2a2a" letter-spacing="-.4">22</text></g>
<g transform="translate(459.48,496.4)"><rect x=".6" y="0" width="21.400" height="22.300" rx="3.600" fill="#b0854e"/><rect x="1.600" y="0" width="19" height="22.300" rx="3" fill="#bb9258"/><circle cx="10.800" cy="11.150" r="6.400" fill="none" stroke="#9c7742" stroke-width="1"/><circle cx="10.800" cy="9.300" r="2.300" fill="#9c7742"/><path d="M6.600 15.500c.8-2.300 2.300-3.200 4.200-3.200s3.400 .9 4.200 3.200c-1.100 1.100-2.600 1.700-4.200 1.700s-3.100-.6-4.200-1.700z" fill="#9c7742"/><rect x="21.200" y="4" width="1.500" height="3.600" rx=".6" fill="#8c9cb0"/><rect x="21.200" y="8.400" width="1.500" height="3.600" rx=".6" fill="#e8a23c"/><rect x="21.200" y="12.800" width="1.500" height="3.600" rx=".6" fill="#d8c23c"/></g>
<g transform="translate(489.10,496.4)"><rect width="22.3" height="22.3" rx="5" fill="#fbfbfb"/><circle cx="4.900" cy="5.600" r="1.500" fill="#2f7cf6"/><circle cx="4.900" cy="11.150" r="1.500" fill="#f04438"/><circle cx="4.900" cy="16.700" r="1.500" fill="#f5a11e"/><path d="M8.400 5.600h10.200M8.400 11.150h10.200M8.400 16.700h10.200" stroke="#d4d4d4" stroke-width=".9"/></g>
<g transform="translate(518.72,496.4)"><g clip-path="url(#dcl)"><rect width="22.3" height="22.3" rx="5" fill="#fbfaf6"/><rect width="22.300" height="6" fill="#fccc2c"/><rect y="5.600" width="22.300" height=".8" fill="#e0b020"/></g><path d="M2.500 10.200h17.300M2.500 13.800h17.300M2.500 17.400h17.300" stroke="#dcd8cc" stroke-width=".7"/></g>
<g transform="translate(548.34,496.4)"><rect width="22.3" height="22.3" rx="5" fill="#fbfbfb"/><path d="M9 6.400l7.600-2v10.200a2.300 1.900 0 1 1-1.300-1.700V7.600L10.300 9v7.400a2.300 1.900 0 1 1-1.300-1.700z" fill="url(#dmu)"/></g>
<g transform="translate(577.96,496.4)"><rect width="22.3" height="22.3" rx="5" fill="url(#dpc)"/><circle cx="11.150" cy="9.700" r="6.600" fill="none" stroke="#f4e6ff" stroke-width="1.200"/><circle cx="11.150" cy="9.700" r="3.900" fill="none" stroke="#f4e6ff" stroke-width="1.200"/><rect x="4" y="14" width="14.300" height="6" fill="url(#dpc)" opacity="0"/><circle cx="11.150" cy="9.700" r="1.800" fill="#fff"/><path d="M9.700 13.400c0-.9 .6-1.400 1.450-1.400s1.450 .5 1.450 1.400l-.5 5.200c-.1 .7-.4 1-.95 1s-.85-.3-.95-1z" fill="#fff" stroke="#9a3cd8" stroke-width=".5"/></g>
<g transform="translate(607.58,496.4)"><rect width="22.3" height="22.3" rx="5" fill="#fbfbfb"/><path d="M5.600 4.400h11.100l1.400 5.400H4.200z" fill="#2a84f0"/><circle cx="11.150" cy="6.600" r="1.500" fill="#8cd048"/><path d="M10 5.700a1.500 1.500 0 0 1 2.300 0l-1.150 .9z" fill="#f0483c"/><rect x="3.800" y="9.800" width="14.700" height="1" fill="#1a5cc0"/><rect x="10.700" y="10.800" width=".9" height="7.600" fill="#9aa0a8"/><rect x="7.800" y="18.300" width="6.700" height=".9" rx=".4" fill="#8a9098"/></g>
<g transform="translate(637.20,496.4)"><rect width="22.3" height="22.3" rx="5" fill="#fbfbfb"/><rect x="4.400" y="12.600" width="3" height="6" fill="#f0443c"/><rect x="7.700" y="8.600" width="3" height="10" fill="#f5a11e"/><rect x="11" y="4.600" width="3" height="14" fill="#42b83c"/><rect x="14.300" y="7.200" width="3" height="11.400" fill="#2f8cf0"/></g>
<g transform="translate(666.82,496.4)"><rect width="22.3" height="22.3" rx="5" fill="#fbfbf8"/><text x="5.800" y="11.400" font-size="11" font-weight="700" text-anchor="middle" fill="#f09a1e">“</text><path d="M17.400 3.400l1.900 1.300-8.200 12.400-2.400 1.400 .5-2.700z" fill="#f5a623"/><path d="M8.700 18.500l.5-2.700 1.900 1.300z" fill="#3a3a3a"/><path d="M17.400 3.400l1.900 1.300-1 1.500-1.900-1.300z" fill="#e07c1a"/></g>
<g transform="translate(696.44,496.4)"><rect width="22.3" height="22.3" rx="5" fill="url(#das)"/><g stroke="#fff" stroke-width="1.700" stroke-linecap="round" fill="none"><path d="M11.900 4.800L6.400 15.800M10.400 4.800l5.700 11M4.400 13.200h7.400M14.800 13.200h3.200"/></g></g>
<g transform="translate(726.06,496.4)"><rect width="22.3" height="22.3" rx="5" fill="url(#dsp)"/><circle cx="11.150" cy="11.150" r="8.300" fill="#3e4044"/><circle cx="11.150" cy="11.150" r="6.600" fill="none" stroke="#aeb1b5" stroke-width="1.400"/><circle cx="11.150" cy="11.150" r="2" fill="#aeb1b5"/><path d="M11.150 11.150V4.600M11.150 11.150l5.700 3.300M11.150 11.150l-5.700 3.300" stroke="#aeb1b5" stroke-width="1.200"/><circle cx="11.150" cy="11.150" r="8.300" fill="none" stroke="#2a2c2f" stroke-width=".8"/></g>
<rect x="756" y="494.200" width="1" height="27.200" rx=".5" fill="#efb6c4"/>
<path d="M764.400 499c0-1.700 1-2.900 2.600-2.900h6.200c1 0 1.600 .4 2.200 1.100l1.300 1.500h12.200c1.600 0 2.600 1.100 2.600 2.700v14.200c0 1.700-1 2.700-2.600 2.700H767c-1.600 0-2.600-1-2.600-2.700z" fill="#4c9fe4"/><path d="M764.400 502.200c0-1.400 1-2.300 2.400-2.300h22.300c1.400 0 2.400 .9 2.400 2.300v13.500c0 1.600-1 2.600-2.600 2.600H767c-1.600 0-2.600-1-2.600-2.600z" fill="url(#dfo)"/>
<path d="M798.700 498.600h17.500l-2 18c-.2 1.200-1 1.800-2.200 1.800h-9.100c-1.200 0-2-.6-2.200-1.800z" fill="url(#dtr)" opacity=".93"/><ellipse cx="807.450" cy="498.600" rx="8.750" ry="1.700" fill="#eef0f3" stroke="#c4c9cf" stroke-width=".5"/>
<circle cx="204.3" cy="523.900" r=".65" fill="#1a0a10"/>
<circle cx="322.6" cy="523.900" r=".65" fill="#1a0a10"/>
<circle cx="381.8" cy="523.900" r=".65" fill="#1a0a10"/>
</svg><!--DOCK-E-->
</div>
</div>
</body>
</html>
